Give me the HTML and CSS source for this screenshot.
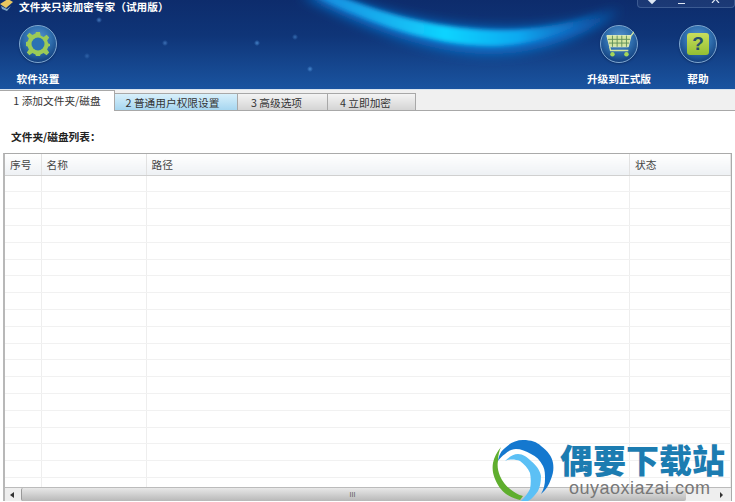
FILE: index.html
```html
<!DOCTYPE html>
<html>

<head>
    <title>文件夹只读加密专家</title>
    <link rel="stylesheet" href="styles.css">
</head>

<body>
    <div class="header">
        <svg class="swoosh" width="735" height="89" viewBox="0 0 735 89">
            <defs>
                <filter id="blur8" x="-20%" y="-50%" width="140%" height="200%"><feGaussianBlur stdDeviation="6"></feGaussianBlur></filter>
                <filter id="blur2" x="-20%" y="-50%" width="140%" height="200%"><feGaussianBlur stdDeviation="2"></feGaussianBlur></filter>
                <linearGradient id="arc" gradientUnits="userSpaceOnUse" x1="310" y1="0" x2="610" y2="0">
                    <stop offset="0" stop-color="#1a86dc"></stop>
                    <stop offset=".45" stop-color="#10d4ff"></stop>
                    <stop offset=".7" stop-color="#10a8f0"></stop>
                    <stop offset="1" stop-color="#1060b8" stop-opacity="0"></stop>
                </linearGradient>
            </defs>
            <path d="M300 -5C365 28 430 54 490 54C540 54 585 36 620 10C580 24 535 30 490 28C430 26 375 10 335 -5Z" fill="#0f72cc" filter="url(#blur8)"></path>
            <path d="M312 -5C372 24 430 45 490 46C532 46 572 32 608 8C572 24 532 32 490 30C432 28 378 12 336 -5Z" fill="url(#arc)" filter="url(#blur2)"></path>
        </svg>
        <div class="win-btns">
            <span class="win-diamond"></span>
            <span class="win-min"></span>
            <svg class="win-close" width="9" height="6" viewBox="0 0 9 6">
                <path d="M1 6L4.5 2L8 6" stroke="#dfe8f4" stroke-width="1.2" fill="none"></path>
            </svg>
        </div>

        <div class="titlebar">
            <svg class="app-icon" width="14" height="12" viewBox="0 0 14 12">
                <path d="M0 5L8 0L13 3L6 9Z" fill="#e8c860"></path>
                <path d="M1 7L7 10L11 7L7 12L2 10Z" fill="#7fa8c8"></path>
            </svg>
            <span class="title">文件夹只读加密专家（试用版）</span>
        </div>

        <div class="toolbar">
            <div class="tool tool-left">
                <div class="orb">
                    <svg width="26" height="26" viewBox="0 0 26 26">
                        <path d="M11 1H15L15.6 4.6L18.6 5.9L21.6 3.8L24.2 6.4L22.1 9.4L23.4 12.4L25 13V15L23.4 15.6L22.1 18.6L24.2 21.6L21.6 24.2L18.6 22.1L15.6 23.4L15 25H11L10.4 23.4L7.4 22.1L4.4 24.2L1.8 21.6L3.9 18.6L2.6 15.6L1 15V11L2.6 10.4L3.9 7.4L1.8 4.4L4.4 1.8L7.4 3.9L10.4 2.6Z" fill="#9ccb57"></path>
                        <circle cx="13" cy="13" r="6.5" fill="#2a72b4"></circle>
                    </svg>
                </div>
                <span class="tool-name">软件设置</span>
            </div>
            <div class="tool-right">
                <div class="tool tool-cart">
                    <div class="orb">
                        <svg width="30" height="28" viewBox="0 0 32 30">
                            <path d="M3 6H29L26 18H6Z" fill="#d5e6a0" stroke="#e8f2c0"></path>
                            <path d="M9 6V18M14 6V18M19 6V18M24 6V18M4 10H28M5 14H27" stroke="#5f8f5a" fill="none"></path>
                            <path d="M29 6L32 2M6 18L7 22H26" stroke="#d5e6a0" stroke-width="1.5" fill="none"></path>
                            <circle cx="9" cy="26" r="2.4" fill="#a4d65a"></circle>
                            <circle cx="24" cy="26" r="2.4" fill="#a4d65a"></circle>
                        </svg>
                    </div>
                    <span class="tool-name">升级到正式版</span>
                </div>
                <div class="tool tool-help">
                    <div class="orb">
                        <div class="help-box">?</div>
                    </div>
                    <span class="tool-name">帮助</span>
                </div>
            </div>
        </div>
    </div>

    <div class="tabs">
        <div class="tab tab-active">1 添加文件夹/磁盘</div>
        <div class="tab tab-blue">2 普通用户权限设置</div>
        <div class="tab tab-three">3 高级选项</div>
        <div class="tab tab-four">4 立即加密</div>
    </div>

    <div class="content">
        <div class="list-title">文件夹/磁盘列表：</div>
        <div class="list">
            <table class="grid">
                <thead>
                    <tr><th class="col-num">序号</th><th class="col-name">名称</th><th>路径</th><th class="col-state">状态</th></tr>
                </thead>
                <tbody>
                    <tr><td></td><td></td><td></td><td></td></tr>
                    <tr><td></td><td></td><td></td><td></td></tr>
                    <tr><td></td><td></td><td></td><td></td></tr>
                    <tr><td></td><td></td><td></td><td></td></tr>
                    <tr><td></td><td></td><td></td><td></td></tr>
                    <tr><td></td><td></td><td></td><td></td></tr>
                    <tr><td></td><td></td><td></td><td></td></tr>
                    <tr><td></td><td></td><td></td><td></td></tr>
                    <tr><td></td><td></td><td></td><td></td></tr>
                    <tr><td></td><td></td><td></td><td></td></tr>
                    <tr><td></td><td></td><td></td><td></td></tr>
                    <tr><td></td><td></td><td></td><td></td></tr>
                    <tr><td></td><td></td><td></td><td></td></tr>
                    <tr><td></td><td></td><td></td><td></td></tr>
                    <tr><td></td><td></td><td></td><td></td></tr>
                    <tr><td></td><td></td><td></td><td></td></tr>
                    <tr><td></td><td></td><td></td><td></td></tr>
                    <tr><td></td><td></td><td></td><td></td></tr>
                    <tr class="row-end"><td></td><td></td><td></td><td></td></tr>
                </tbody>
            </table>
            <div class="scrollbar">
                <span class="arrow-left"></span>
                <div class="thumb">III</div>
                <span class="arrow-right"></span>
            </div>
        </div>
    </div>

    <!-- watermark -->
    <div class="watermark">
        <svg class="wm-logo" width="64" height="63" viewBox="0 0 64 63">
            <path d="M7 22C8 16 10 12 14 9C19 4 25 1 32 1C40 1 46 3 50 7C57 12 61 18 62 24C63 30 62 35 60 40C58 46 55 51 50 55C53 50 54 45 54 40C54 35 54 31 52 27C49 21 45 17 40 15C35 12 30 10 25 10C21 10 17 12 14 15C11 17 9 19 7 22Z" fill="#1478cf"></path>
            <path d="M14 22C18 18 22 15 27 15C32 15 36 18 40 22C45 26 49 31 50 37C50 43 49 48 47 52C44 56 41 60 37 62H30C34 58 37 54 39 50C40 45 40 39 39 34C37 29 33 25 29 22C24 20 18 20 14 22Z" fill="#5cc0f5"></path>
            <path d="M10 8C6 13 3 18 2 24C1 30 2 35 4 40C7 47 10 51 15 55C20 58 25 60 29 61L32 57C27 56 23 53 19 50C15 47 11 42 9 37C7 32 6 27 7 22C7 17 8 12 10 8Z" fill="#5fae2e"></path>
        </svg>
        <div class="wm-text">
            <div class="wm-cn">偶要下载站</div>
            <div class="wm-en">ouyaoxiazai.com</div>
        </div>
    </div>
</body>

</html>
```

FILE: styles.css
```css
html, body {
    margin: 0;
    padding: 0;
}
body {
    width: 735px;
    height: 502px;
    overflow: hidden;
    position: relative;
    background-color: #fff;
    font-family: "Noto Sans CJK SC", "Liberation Sans", sans-serif;
    font-size: 10.7px;
    color: #333;
}

/* header */
.header {
    height: 89px;
    position: relative;
    overflow: hidden;
    background-color: #123f86;
    background-image:
        radial-gradient(circle at 99px 20px, rgba(90, 150, 220, .7) 0, rgba(90, 150, 220, 0) 3px),
        radial-gradient(circle at 165px 43px, rgba(90, 150, 220, .6) 0, rgba(90, 150, 220, 0) 3px),
        radial-gradient(circle at 87px 56px, rgba(90, 150, 220, .4) 0, rgba(90, 150, 220, 0) 3px),
        radial-gradient(circle at 257px 43px, rgba(90, 160, 230, .7) 0, rgba(90, 160, 230, 0) 3px),
        radial-gradient(circle at 310px 69px, rgba(90, 160, 230, .7) 0, rgba(90, 160, 230, 0) 3px),
        radial-gradient(circle at 295px 37px, rgba(90, 160, 230, .5) 0, rgba(90, 160, 230, 0) 3px),
        linear-gradient(to bottom, #0d2c6c 0, #0f3578 40%, #1a54a0 100%);
}
.swoosh {
    position: absolute;
    left: 0;
    top: 0;
}
.win-btns {
    position: absolute;
    top: 0;
    right: 0;
    width: 98px;
    height: 8px;
    display: flex;
    align-items: flex-start;
    box-sizing: border-box;
    padding-left: 11px;
    background-color: rgba(255, 255, 255, .06);
    border: 1px solid rgba(160, 190, 230, .25);
    border-top: none;
    border-radius: 0 0 4px 4px;
}
.win-diamond {
    width: 6px;
    height: 6px;
    margin: -3px 0 0 0;
    background-color: #dfe8f4;
    transform: rotate(45deg);
}
.win-min {
    width: 7px;
    height: 1px;
    margin: 3px 0 0 23px;
    background-color: #dfe8f4;
}
.win-close {
    margin: -3px 0 0 26px;
}
.titlebar {
    height: 13px;
    display: flex;
    align-items: center;
    position: relative;
}
.app-icon {
    margin-top: -4px;
}
.title {
    margin-left: 5px;
    color: #fff;
    font-size: 10.7px;
    font-weight: bold;
    line-height: 13px;
    white-space: nowrap;
}
.toolbar {
    display: flex;
    justify-content: space-between;
    position: relative;
    padding-top: 12px;
}
.tool {
    display: flex;
    flex-direction: column;
    align-items: center;
    width: 60px;
}
.tool-left {
    margin-left: 8px;
}
.tool-right {
    display: flex;
}
.tool-cart {
    width: 70px;
    margin-right: 24px;
}
.tool-help {
    width: 40px;
    margin-right: 17px;
}
.orb {
    width: 38px;
    height: 38px;
    box-sizing: border-box;
    border-radius: 50%;
    display: flex;
    align-items: center;
    justify-content: center;
    background: radial-gradient(circle at 50% 35%, #5a96cf 0, #2f6eae 45%, #123f7d 80%, #0d3268 100%);
    border: 1px solid #7fa7cf;
    box-shadow: 0 1px 2px rgba(10, 30, 70, .5);
}
.help-box {
    width: 22px;
    height: 22px;
    border-radius: 3px;
    background: linear-gradient(to bottom, #c9de5c, #93bf33);
    color: #27506f;
    font-family: "Liberation Sans", sans-serif;
    font-size: 19px;
    font-weight: bold;
    line-height: 22px;
    text-align: center;
}
.tool-name {
    margin-top: 8px;
    color: #fff;
    font-size: 10.7px;
    font-weight: bold;
    line-height: 16px;
    white-space: nowrap;
}

/* tabs */
.tabs {
    height: 22px;
    box-sizing: border-box;
    display: flex;
    align-items: flex-end;
    background-color: #f0f0f0;
    border-top: 1px solid #d9e4ee;
    border-bottom: 1px solid #a8a8a8;
}
.tab {
    height: 17px;
    box-sizing: border-box;
    margin-right: 0;
    padding-right: 10px;
    border: 1px solid #a8a8a8;
    border-left: none;
    border-bottom: none;
    background: linear-gradient(to bottom, #f4f4f4, #d4d4d4);
    font-size: 10.7px;
    line-height: 17px;
    text-align: center;
    color: #333;
    white-space: nowrap;
}
.tab-active {
    width: 115px;
    height: 21px;
    margin-bottom: -1px;
    padding-right: 0;
    background: #fff;
    line-height: 20px;
}
.tab-blue {
    width: 123px;
    padding-right: 7px;
    background: linear-gradient(to bottom, #d8f0fb, #a6d6f0);
}
.tab-three {
    width: 90px;
    padding-right: 12px;
}
.tab-four {
    width: 88px;
    padding-right: 12px;
}

/* list */
.content {
    padding: 18px 3px 0 3px;
}
.list-title {
    margin-left: 8px;
    color: #222;
    font-size: 10.7px;
    font-weight: bold;
    line-height: 16px;
}
.list {
    margin-top: 8px;
    height: 348px;
    box-sizing: border-box;
    border: 1px solid #aaa;
    border-left: 2px solid #b8b8b8;
    border-bottom: none;
    overflow: hidden;
}
.grid {
    width: 100%;
    height: 333px;
    border-collapse: collapse;
    table-layout: fixed;
}
.grid th {
    height: 21px;
    padding: 1px 0 0 5px;
    box-sizing: border-box;
    background: linear-gradient(to bottom, #fff, #eef1f4);
    border-right: 1px solid #e2e2e2;
    border-bottom: 1px solid #d0d0d0;
    font-size: 10.7px;
    font-weight: normal;
    text-align: left;
    color: #444;
}
.grid td {
    height: 17px;
    box-sizing: border-box;
    padding: 0;
    border-right: 1px solid #eee;
    border-bottom: 1px solid #f1f1f1;
}
.grid tbody tr:nth-child(5n+1) td {
    height: 16px;
}
.grid .row-end td {
    height: auto;
    border-bottom: none;
}
.col-num {
    width: 36px;
}
.col-name {
    width: 105px;
}
.col-state {
    width: 101px;
}
.scrollbar {
    height: 14px;
    box-sizing: border-box;
    display: flex;
    align-items: center;
    background-color: #eee;
    border-top: 1px solid #bbb;
}
.thumb {
    width: 665px;
    height: 13px;
    box-sizing: border-box;
    margin-left: 7px;
    padding-right: 3px;
    background: linear-gradient(to bottom, #e8e8e8, #b8b8b8);
    border-left: 1px solid #999;
    border-radius: 2px;
    color: #555;
    font-family: "Liberation Sans", sans-serif;
    font-size: 7px;
    line-height: 13px;
    text-align: center;
}
.arrow-left, .arrow-right {
    width: 0;
    height: 0;
    border-top: 3px solid transparent;
    border-bottom: 3px solid transparent;
}
.arrow-left {
    margin-left: 5px;
    border-right: 4px solid #333;
}
.arrow-right {
    margin-left: auto;
    margin-right: 8px;
    border-left: 3px solid #333;
}

/* watermark sits over the list */
.watermark {
    position: absolute;
    left: 491px;
    top: 439px;
    display: flex;
}
.wm-logo {
    flex: none;
}
.wm-text {
    margin-left: 5px;
    margin-top: 1px;
    width: 175px;
}
.wm-cn {
    color: #1c7cb1;
    font-size: 33px;
    font-weight: 900;
    line-height: 38px;
    white-space: nowrap;
}
.wm-en {
    margin-top: 0;
    margin-left: 9px;
    color: #777;
    font-family: "Liberation Sans", sans-serif;
    font-size: 18px;
    letter-spacing: .5px;
    line-height: 20px;
    white-space: nowrap;
}
```
